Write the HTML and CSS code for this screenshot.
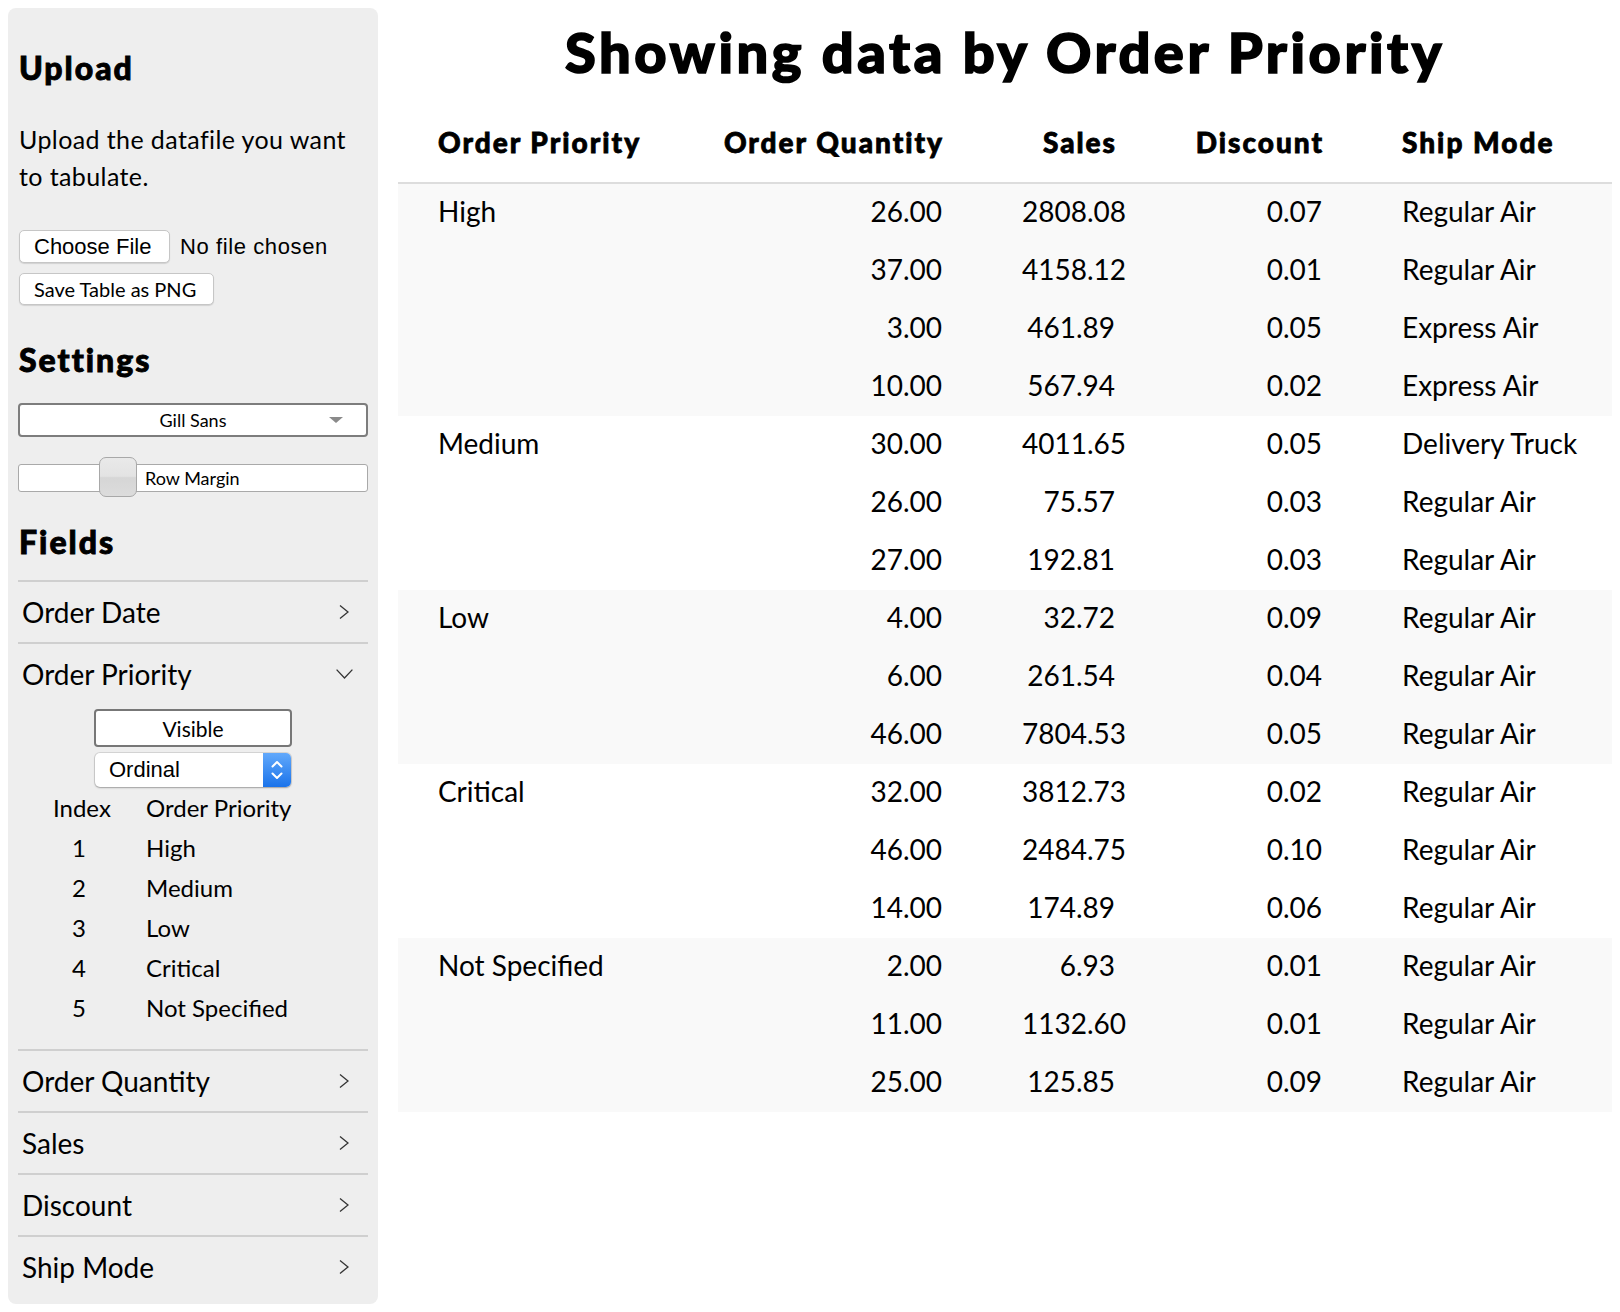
FILE: index.html
```html
<!DOCTYPE html>
<html lang="en">
<head>
<meta charset="utf-8">
<title>Tabulate</title>
<link rel="stylesheet" href="styles.css">
</head>
<body>
<aside class="sidebar">
  <h2 class="side-title">Upload</h2>
  <p class="intro">Upload the datafile you want<br>to tabulate.</p>
  <div class="file-row">
    <button class="file-btn" type="button">Choose File</button>
    <span class="file-name">No file chosen</span>
  </div>
  <button class="save-btn" type="button">Save Table as PNG</button>

  <h2 class="side-title settings">Settings</h2>
  <div class="font-select"><span class="font-name">Gill Sans</span><span class="tri"></span></div>
  <div class="slider"><span class="thumb"></span><span class="slider-label">Row Margin</span></div>

  <h2 class="side-title fields-title">Fields</h2>
  <ul class="fields">
    <li class="field">
      <div class="field-head"><span>Order Date</span><span class="chev"><svg width="10" height="14" viewBox="0 0 10 14"><path d="M1 0.6 L9 7 L1 13.4" fill="none" stroke="#333" stroke-width="1.3"/></svg></span></div>
    </li>
    <li class="field open">
      <div class="field-head"><span>Order Priority</span><span class="chev"><svg width="17" height="10" viewBox="0 0 17 10"><path d="M0.6 0.6 L8.5 9 L16.4 0.6" fill="none" stroke="#333" stroke-width="1.3"/></svg></span></div>
      <button class="visible-btn" type="button">Visible</button>
      <div class="ordinal">
        <span class="ordinal-text">Ordinal</span>
        <span class="stepper"><svg width="14" height="24" viewBox="0 0 14 24"><path d="M2.5 8.5 L7 4 L11.5 8.5 M2.5 15.5 L7 20 L11.5 15.5" fill="none" stroke="#fff" stroke-width="2" stroke-linecap="round" stroke-linejoin="round"/></svg></span>
      </div>
      <div class="order-index">
        <span class="idx">Index</span><span>Order Priority</span>
        <span class="idx">1</span><span>High</span>
        <span class="idx">2</span><span>Medium</span>
        <span class="idx">3</span><span>Low</span>
        <span class="idx">4</span><span>Critical</span>
        <span class="idx">5</span><span>Not Specified</span>
      </div>
    </li>
    <li class="field">
      <div class="field-head"><span>Order Quantity</span><span class="chev"><svg width="10" height="14" viewBox="0 0 10 14"><path d="M1 0.6 L9 7 L1 13.4" fill="none" stroke="#333" stroke-width="1.3"/></svg></span></div>
    </li>
    <li class="field">
      <div class="field-head"><span>Sales</span><span class="chev"><svg width="10" height="14" viewBox="0 0 10 14"><path d="M1 0.6 L9 7 L1 13.4" fill="none" stroke="#333" stroke-width="1.3"/></svg></span></div>
    </li>
    <li class="field">
      <div class="field-head"><span>Discount</span><span class="chev"><svg width="10" height="14" viewBox="0 0 10 14"><path d="M1 0.6 L9 7 L1 13.4" fill="none" stroke="#333" stroke-width="1.3"/></svg></span></div>
    </li>
    <li class="field">
      <div class="field-head"><span>Ship Mode</span><span class="chev"><svg width="10" height="14" viewBox="0 0 10 14"><path d="M1 0.6 L9 7 L1 13.4" fill="none" stroke="#333" stroke-width="1.3"/></svg></span></div>
    </li>
  </ul>
</aside>

<main class="main">
  <h1 class="title">Showing data by Order Priority</h1>
  <table class="data">
    <colgroup>
      <col class="c1"><col class="c2"><col class="c3"><col class="c4"><col class="c5">
    </colgroup>
    <thead>
      <tr><th>Order Priority</th><th class="num">Order Quantity</th><th class="num">Sales</th><th class="num">Discount</th><th>Ship Mode</th></tr>
    </thead>
    <tbody class="band">
      <tr><td>High</td><td class="num">26.00</td><td class="num">2808.08</td><td class="num">0.07</td><td>Regular Air</td></tr>
      <tr><td></td><td class="num">37.00</td><td class="num">4158.12</td><td class="num">0.01</td><td>Regular Air</td></tr>
      <tr><td></td><td class="num">3.00</td><td class="num">461.89</td><td class="num">0.05</td><td>Express Air</td></tr>
      <tr><td></td><td class="num">10.00</td><td class="num">567.94</td><td class="num">0.02</td><td>Express Air</td></tr>
    </tbody>
    <tbody>
      <tr><td>Medium</td><td class="num">30.00</td><td class="num">4011.65</td><td class="num">0.05</td><td>Delivery Truck</td></tr>
      <tr><td></td><td class="num">26.00</td><td class="num">75.57</td><td class="num">0.03</td><td>Regular Air</td></tr>
      <tr><td></td><td class="num">27.00</td><td class="num">192.81</td><td class="num">0.03</td><td>Regular Air</td></tr>
    </tbody>
    <tbody class="band">
      <tr><td>Low</td><td class="num">4.00</td><td class="num">32.72</td><td class="num">0.09</td><td>Regular Air</td></tr>
      <tr><td></td><td class="num">6.00</td><td class="num">261.54</td><td class="num">0.04</td><td>Regular Air</td></tr>
      <tr><td></td><td class="num">46.00</td><td class="num">7804.53</td><td class="num">0.05</td><td>Regular Air</td></tr>
    </tbody>
    <tbody>
      <tr><td>Critical</td><td class="num">32.00</td><td class="num">3812.73</td><td class="num">0.02</td><td>Regular Air</td></tr>
      <tr><td></td><td class="num">46.00</td><td class="num">2484.75</td><td class="num">0.10</td><td>Regular Air</td></tr>
      <tr><td></td><td class="num">14.00</td><td class="num">174.89</td><td class="num">0.06</td><td>Regular Air</td></tr>
    </tbody>
    <tbody class="band">
      <tr><td>Not Specified</td><td class="num">2.00</td><td class="num">6.93</td><td class="num">0.01</td><td>Regular Air</td></tr>
      <tr><td></td><td class="num">11.00</td><td class="num">1132.60</td><td class="num">0.01</td><td>Regular Air</td></tr>
      <tr><td></td><td class="num">25.00</td><td class="num">125.85</td><td class="num">0.09</td><td>Regular Air</td></tr>
    </tbody>
  </table>
</main>
</body>
</html>
```
FILE: styles.css
```css
* { box-sizing: border-box; }

body {
  margin: 8px;
  display: flex;
  gap: 20px;
  font-family: Lato, "Open Sans", sans-serif;
  color: #000;
  background: #fff;
}

/* ---------- Sidebar ---------- */
.sidebar {
  flex: 0 0 370px;
  height: 1296px;
  background: #eeeeee;
  border-radius: 8px;
  padding: 40px 10px 0;
}

.side-title {
  margin: 0;
  font-size: 32px;
  line-height: 40px;
  font-weight: 900;
  letter-spacing: 2px;
  -webkit-text-stroke: 0.9px #000;
  padding-left: 1px;
}

.intro {
  margin: 33px 0 0;
  font-size: 25px;
  line-height: 37px;
  letter-spacing: 0.4px;
  padding-left: 1px;
}

.file-row {
  margin-top: 35px;
  display: flex;
  align-items: center;
  gap: 10px;
  padding-left: 1px;
}

.file-btn {
  width: 151px;
  height: 33px;
  padding: 0 0 0 14px;
  text-align: left;
  font-family: "Liberation Sans", Arial, sans-serif;
  font-size: 22px;
  color: #000;
  background: #fff;
  border: 1px solid #c6c6c6;
  border-radius: 5px;
  box-shadow: 0 1px 1px rgba(0, 0, 0, 0.12);
}

.file-name {
  font-family: "Liberation Sans", Arial, sans-serif;
  font-size: 22px;
  letter-spacing: 0.6px;
}

.save-btn {
  display: block;
  margin: 10px 0 0 1px;
  width: 195px;
  height: 32px;
  padding: 0 0 0 14px;
  text-align: left;
  font-family: Lato, sans-serif;
  font-size: 20px;
  color: #000;
  background: #fff;
  border: 1px solid #c6c6c6;
  border-radius: 5px;
  box-shadow: 0 1px 1px rgba(0, 0, 0, 0.12);
}

.settings { margin-top: 35px; }

.font-select {
  margin-top: 23px;
  height: 34px;
  background: #fff;
  border: 2px solid #7d7d7d;
  border-radius: 4px;
  display: grid;
  grid-template-columns: 1fr auto 1fr;
  align-items: center;
  font-size: 18px;
}

.font-name { grid-column: 2; }

.tri {
  grid-column: 3;
  justify-self: end;
  margin-right: 23px;
  width: 0;
  height: 0;
  border-left: 7.5px solid transparent;
  border-right: 7.5px solid transparent;
  border-top: 6px solid #8a8a8a;
}

.slider {
  position: relative;
  margin-top: 27px;
  height: 28px;
  background: #fff;
  border: 1px solid #a9a9a9;
  border-radius: 3px;
  display: flex;
  align-items: center;
  padding-left: 126px;
  font-size: 18px;
}

.thumb {
  position: absolute;
  left: 80px;
  top: -8px;
  width: 38px;
  height: 40px;
  border: 1px solid #a8a8a8;
  border-radius: 7px;
  background: linear-gradient(#e9e9e9 0%, #e3e3e3 48%, #d6d6d6 52%, #dcdcdc 100%);
}

.fields-title { margin-top: 30px; }

.fields {
  list-style: none;
  margin: 18px 0 0;
  padding: 0;
}

.field { border-top: 2px solid #cfcfcf; }

.field-head {
  height: 60px;
  display: flex;
  align-items: center;
  justify-content: space-between;
  padding: 0 12px 0 4px;
  font-size: 28px;
}

.chev {
  width: 24px;
  display: flex;
  justify-content: center;
  align-items: center;
}

.field.open { padding-bottom: 21px; }

.visible-btn {
  display: block;
  margin: 5px auto 0;
  width: 198px;
  height: 38px;
  font-family: Lato, sans-serif;
  font-size: 21px;
  color: #000;
  background: #fff;
  border: 2px solid #777;
  border-radius: 4px;
}

.ordinal {
  margin: 6px auto 0;
  width: 196px;
  height: 34px;
  display: flex;
  background: #fff;
  border-radius: 5px;
  box-shadow: 0 0 0 1px rgba(0, 0, 0, 0.1), 0 1px 2px rgba(0, 0, 0, 0.25);
  overflow: hidden;
}

.ordinal-text {
  flex: 1;
  display: flex;
  align-items: center;
  padding-left: 14px;
  font-family: "Liberation Sans", Arial, sans-serif;
  font-size: 22px;
}

.stepper {
  width: 28px;
  display: flex;
  align-items: center;
  justify-content: center;
  background: linear-gradient(#62a9fb, #1a73ea);
}

.order-index {
  margin: 1px 0 0 35px;
  display: grid;
  grid-template-columns: 52px auto;
  column-gap: 41px;
  font-size: 24px;
  line-height: 40px;
}

.order-index .idx { text-align: center; }

/* ---------- Main ---------- */
.main {
  flex: 1;
  min-width: 0;
}

.title {
  margin: 12px 0 28px;
  text-align: center;
  font-size: 56px;
  line-height: 64px;
  font-weight: 900;
  letter-spacing: 3.5px;
  -webkit-text-stroke: 1.6px #000;
}

.data {
  width: 100%;
  border-collapse: collapse;
  table-layout: fixed;
  font-size: 28px;
}

.c1 { width: 282px; }
.c2 { width: 302px; }
.c3 { width: 173px; }
.c4 { width: 207px; }
.c5 { width: 250px; }

.data th {
  font-weight: 900;
  line-height: 40px;
  padding: 10px 40px 20px;
  border-bottom: 2px solid #dddddd;
  text-align: left;
  white-space: nowrap;
  letter-spacing: 2px;
  -webkit-text-stroke: 0.8px #000;
}

.data th.num { padding-right: 38px; }

.data td {
  line-height: 54px;
  padding: 0 40px 4px;
  white-space: nowrap;
}

.data .num { text-align: right; }

.data tbody.band { background: #f9f9f9; }
```
